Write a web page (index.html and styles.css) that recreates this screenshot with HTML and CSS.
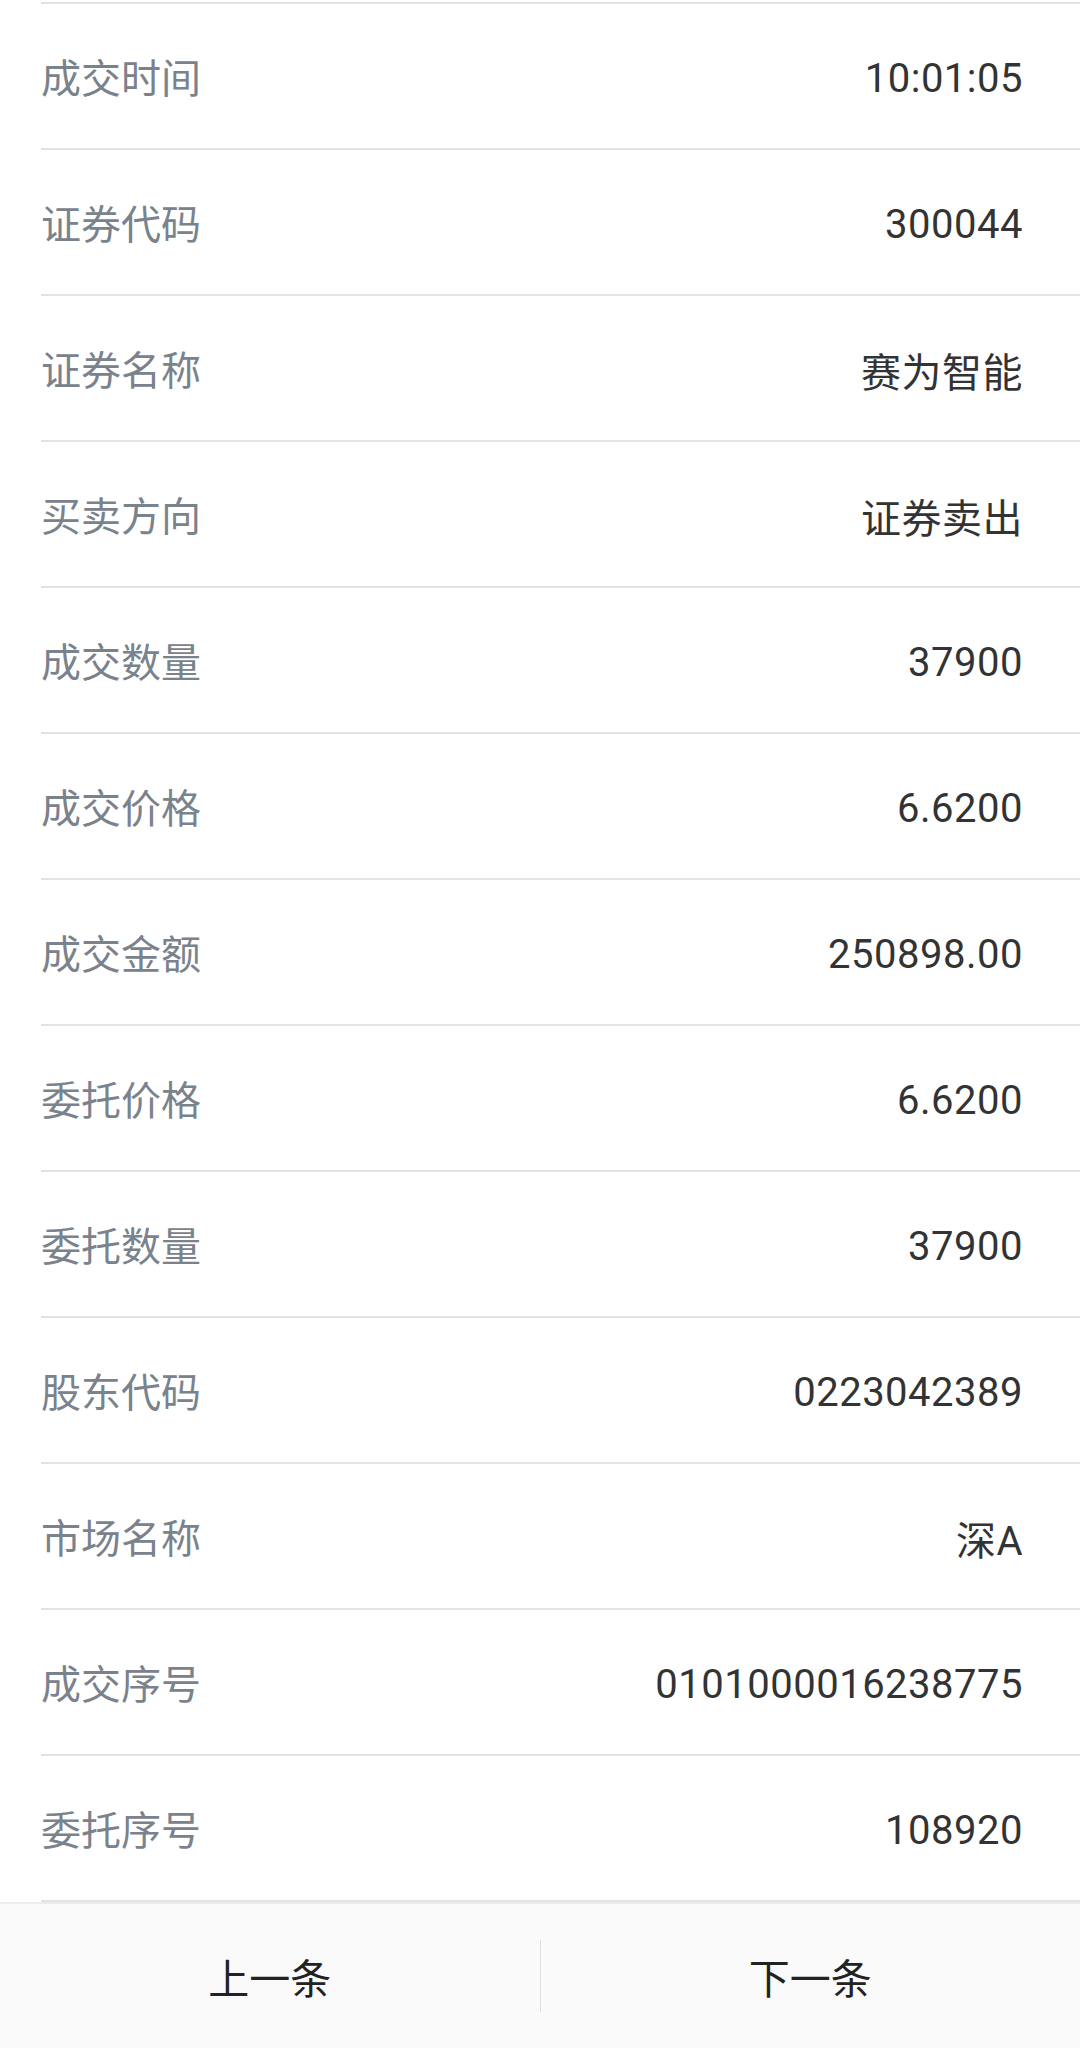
FILE: index.html
```html
<!DOCTYPE html>
<html>
<head>
    <meta name="viewport" content="width=device-width, initial-scale=1">
    <link rel="stylesheet" href="styles.css">
</head>
<body>

<div class="detail-list">
    <div class="row"><span class="label">成交时间</span><span class="value">10:01:05</span></div>
    <div class="row"><span class="label">证券代码</span><span class="value">300044</span></div>
    <div class="row"><span class="label">证券名称</span><span class="value">赛为智能</span></div>
    <div class="row"><span class="label">买卖方向</span><span class="value">证券卖出</span></div>
    <div class="row"><span class="label">成交数量</span><span class="value">37900</span></div>
    <div class="row"><span class="label">成交价格</span><span class="value">6.6200</span></div>
    <div class="row"><span class="label">成交金额</span><span class="value">250898.00</span></div>
    <div class="row"><span class="label">委托价格</span><span class="value">6.6200</span></div>
    <div class="row"><span class="label">委托数量</span><span class="value">37900</span></div>
    <div class="row"><span class="label">股东代码</span><span class="value">0223042389</span></div>
    <div class="row"><span class="label">市场名称</span><span class="value">深A</span></div>
    <div class="row"><span class="label">成交序号</span><span class="value">0101000016238775</span></div>
    <div class="row"><span class="label">委托序号</span><span class="value">108920</span></div>
</div>

<div class="pager">
    <a href="#prev" class="pager-btn">上一条</a>
    <span class="pager-sep"></span>
    <a href="#next" class="pager-btn">下一条</a>
</div>

</body>
</html>
```

FILE: styles.css
```css
body {
  margin: 0;
  font-family: Roboto, "Noto Sans CJK SC", sans-serif;
  background: #fff;
}
* {
  box-sizing: border-box;
}

.detail-list {
  margin: 2px 0 0 41px;
  border-top: 2px solid #e3e3e3;
}

.row {
  display: flex;
  align-items: center;
  justify-content: space-between;
  height: 146px;
  padding-right: 57px;
  border-bottom: 2px solid #e3e3e3;
}

.label {
  color: #7a828c;
  font-size: 40px;
}

.value {
  color: #333;
  font-size: 40px;
  letter-spacing: 0.5px;
  padding-top: 4px;
}

.pager {
  display: flex;
  align-items: center;
  height: 146px;
  background-color: #fafafa;
  border-top: 2px solid #ececec;
}

.pager-btn {
  flex: 1;
  text-align: center;
  color: #222;
  font-size: 41px;
  text-decoration: none;
}

.pager-sep {
  width: 1px;
  height: 72px;
  background-color: #e0e0e0;
}
```
